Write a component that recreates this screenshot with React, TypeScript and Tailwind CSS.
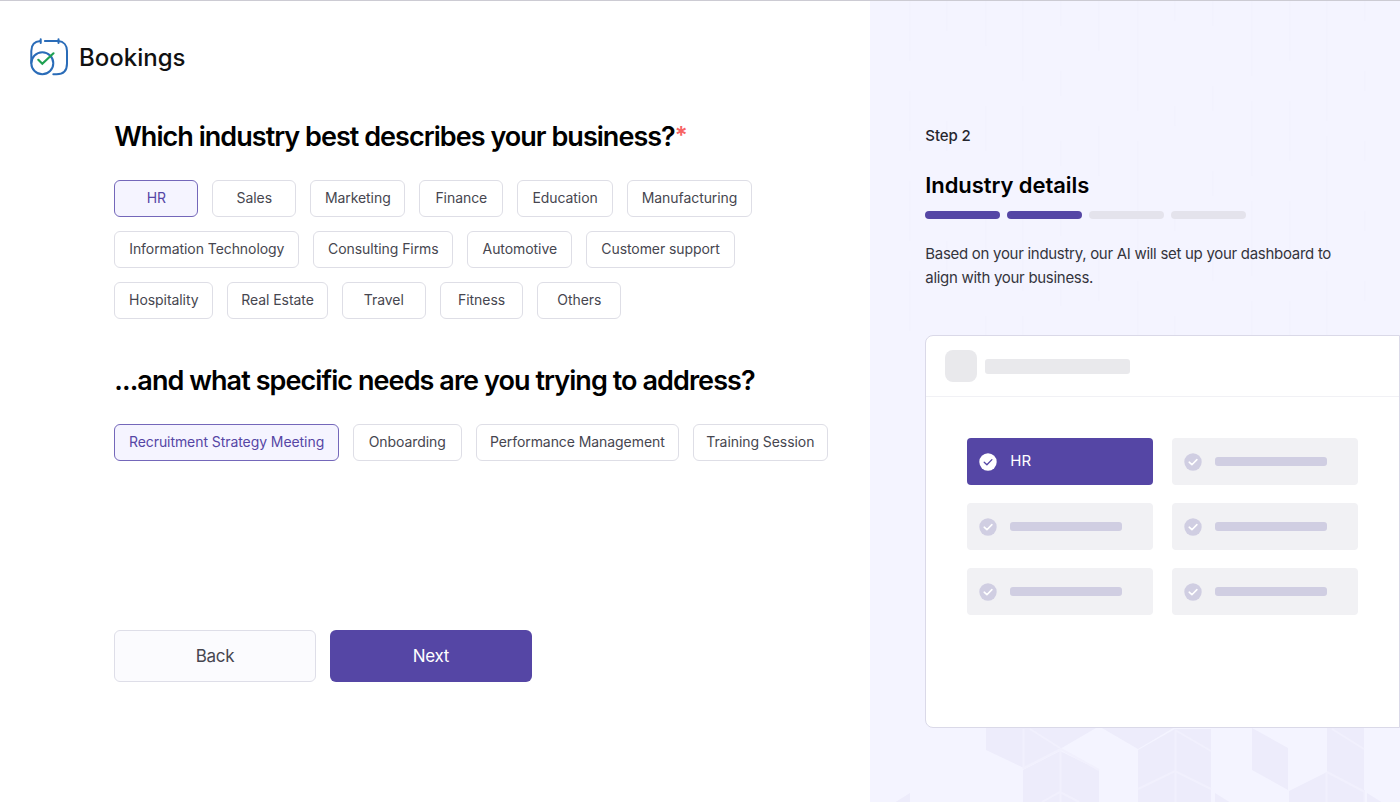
import React from "react";
import { clsx } from "clsx";

const industries = [
    [
        { label: "HR", width: "w-[84px]", active: true },
        { label: "Sales", width: "w-[84px]" },
        { label: "Marketing", width: "w-[95px]" },
        { label: "Finance", width: "w-[84px]" },
        { label: "Education", width: "w-[95.5px]" },
        { label: "Manufacturing", width: "w-[125.5px]" },
    ],
    [
        { label: "Information Technology", width: "w-[185px]" },
        { label: "Consulting Firms", width: "w-[140px]" },
        { label: "Automotive", width: "w-[105px]" },
        { label: "Customer support", width: "w-[148.5px]" },
    ],
    [
        { label: "Hospitality", width: "w-[99px]" },
        { label: "Real Estate", width: "w-[100.5px]" },
        { label: "Travel", width: "w-[84px]" },
        { label: "Fitness", width: "w-[83.5px]" },
        { label: "Others", width: "w-[84px]" },
    ],
];

const needs = [
    { label: "Recruitment Strategy Meeting", width: "w-[224.5px]", active: true },
    { label: "Onboarding", width: "w-[109px]" },
    { label: "Performance Management", width: "w-[203px]" },
    { label: "Training Session", width: "w-[135px]" },
];

// Faint dashed verticals behind the side panel
const gridLines = [
    { x: 40, dash: "60 30" },
    { x: 77, dash: "30 90" },
    { x: 116, dash: "45 60" },
    { x: 153, dash: "80 25" },
    { x: 191, dash: "25 45" },
    { x: 229, dash: "50 75" },
    { x: 268, dash: "110 30" },
    { x: 305, dash: "20 85" },
    { x: 343, dash: "25 60" },
    { x: 382, dash: "75 25" },
    { x: 420, dash: "60 40" },
    { x: 457, dash: "120 15" },
    { x: 495, dash: "20 50" },
];

type Option = { label: string; width: string; active?: boolean };

function Chip({ label, width, active }: Option) {
    return (
        <button
            className={clsx(
                "h-[37px] shrink-0 rounded-md border pb-0.5 text-[14px] tracking-[-0.07px] whitespace-nowrap",
                width,
                active ? "border-[#7467ba] bg-[#f5f4ff] text-[#5546a5]" : "border-[#dedee6] bg-white text-[#46464f]"
            )}
        >
            {label}
        </button>
    );
}

function Logo() {
    return (
        <svg className="h-10 w-10" viewBox="0 0 40 40" fill="none" strokeLinecap="round">
            <g stroke="#2a6cb8" strokeWidth="2">
                <path d="M11.3 4.1C5.5 4.6 2.3 8.5 2.3 14V26" />
                <path d="M11.7 2.3V6M29.5 2.3V6" />
                <path d="M15.9 4.1H29.3C34.8 4.5 38 8.5 38 14V26.5C38 33.5 34 37.3 27.5 37.3H24.3" />
                <circle cx="13.3" cy="26.3" r="11" />
            </g>
            <path d="M9.3 22.8L13.3 26.7L24.5 16.3" stroke="#1fa152" strokeWidth="2.2" />
        </svg>
    );
}

function CheckBadge({ active }: { active?: boolean }) {
    return (
        <svg className="h-[18px] w-[18px] shrink-0" viewBox="0 0 18 18" fill="none">
            <circle cx="9" cy="9" r="8.7" fill={active ? "#ffffff" : "#d0cee2"} />
            <path
                d="M5.2 9.2L7.9 11.7L12.9 6.6"
                stroke={active ? "#5546a5" : "#ffffff"}
                strokeWidth={active ? 1.3 : 1.6}
                strokeLinecap="round"
                strokeLinejoin="round"
            />
        </svg>
    );
}

function Backdrop() {
    return (
        <svg className="absolute inset-0 h-full w-full" viewBox="0 0 530 801" fill="none">
            {gridLines.map((line) => (
                <path key={line.x} d={`M${line.x} 0V334`} stroke="#f1f1fd" strokeDasharray={line.dash} />
            ))}
            <g fill="#edecfb">
                <path d="M116 720H238L190 748L154 767L116 749Z" />
                <path d="M190 750L229 769V802H153V769Z" />
                <path d="M220 720H315L268 748Z" />
                <path d="M268 749L305 728H341V802H268Z" />
                <path d="M382 727L418 747V789L382 769Z" />
                <path d="M457 720H494V789L531 810H419V790L457 771Z" />
                <path d="M345 792L361 802H345Z" />
                <path d="M24 802L40 792V802Z" />
            </g>
            <g stroke="#f1f0fd" strokeWidth="2">
                <path d="M153.5 728V768M160 728L190 747M190.5 750V802M172 801L190 791L209 801" />
                <path d="M305.5 729V802M305 729L341 750M268 788L305 770L341 788" />
                <path d="M456.5 771V802M457 771L495 791M462 728L494 748M494.5 790V802" />
                <path d="M154 767L191 748L229 769" />
            </g>
            <path d="M495 789V802H531V728H495Z" fill="#f4f4ff" />
            <path d="M497 792L513 802H497Z" fill="#edecfb" />
        </svg>
    );
}

function Tile({ label }: { label?: string }) {
    return (
        <div
            className={clsx(
                "flex h-[47px] items-center rounded pl-3 text-white",
                label ? "bg-[#5546a5]" : "bg-[#f1f1f4]"
            )}
        >
            <CheckBadge active={Boolean(label)} />
            {label ? (
                <span className="ml-[13px] text-[15px]">{label}</span>
            ) : (
                <span className="ml-[13px] h-[9px] w-[112px] rounded-[3px] bg-[#d0cee2]" />
            )}
        </div>
    );
}

export default function App() {
    return (
        <div className="flex h-[802px] w-[1400px] overflow-hidden border-t border-[#cccbd3] bg-white font-['Inter',sans-serif]">
            <main className="w-[870px] shrink-0">
                <header className="flex items-center gap-[10px] pt-9 pl-[29px]">
                    <Logo />
                    <span className="pt-px text-[24px] leading-[39px] font-medium text-[#111111]">Bookings</span>
                </header>

                <div className="pl-[114.3px]">
                    <h1 className="mt-[42px] h-9 text-[27px] leading-9 font-semibold tracking-[-0.97px] text-black">
                        Which industry best describes your business?
                        <span className="align-[2px] text-[24px] leading-none text-[#f76464]">*</span>
                    </h1>
                    <div className="mt-[25px] flex flex-col gap-[14px]">
                        {industries.map((row, i) => (
                            <div key={i} className="flex gap-[14px]">
                                {row.map((item) => (
                                    <Chip key={item.label} {...item} />
                                ))}
                            </div>
                        ))}
                    </div>

                    <h2 className="mt-[44px] text-[27px] leading-9 font-semibold tracking-[-0.93px] text-black">
                        ...and what specific needs are you trying to address?
                    </h2>
                    <div className="mt-[25px] flex gap-[14px]">
                        {needs.map((item) => (
                            <Chip key={item.label} {...item} />
                        ))}
                    </div>

                    <div className="mt-[169px] flex gap-[14px]">
                        <button className="h-[52px] w-[201.5px] rounded-md border border-[#dedee8] bg-[#fbfbfe] pt-px text-[17px] tracking-[-0.3px] text-[#46464f]">
                            Back
                        </button>
                        <button className="h-[52px] w-[202px] rounded-md bg-[#5546a5] pt-px text-[17px] tracking-[-0.3px] text-white">
                            Next
                        </button>
                    </div>
                </div>
            </main>

            <aside className="relative w-[530px] shrink-0 bg-[#f4f4ff]">
                <Backdrop />
                <div className="relative pt-[123px] pl-[55.3px]">
                    <p className="text-[15px] leading-6 font-medium tracking-[-0.1px] text-[#26262e]">Step 2</p>
                    <h3 className="mt-[21px] text-[22px] leading-8 font-semibold tracking-[-0.07px] text-black">
                        Industry details
                    </h3>
                    <div className="mt-[10px] flex gap-[7.5px]">
                        <span className="h-[8px] w-[74.5px] rounded-full bg-[#5546a5]" />
                        <span className="h-[8px] w-[74.5px] rounded-full bg-[#5546a5]" />
                        <span className="h-[8px] w-[74.5px] rounded-full bg-[#e4e3ec]" />
                        <span className="h-[8px] w-[74.5px] rounded-full bg-[#e4e3ec]" />
                    </div>
                    <p className="mt-[23px] text-[15px] leading-[23.5px] tracking-[-0.29px] whitespace-nowrap text-[#34343d]">
                        Based on your industry, our AI will set up your dashboard to
                        <br />
                        align with your business.
                    </p>

                    <div className="mt-[46px] h-[393px] rounded-l-lg border border-[#dad9e8] bg-white">
                        <div className="flex h-[61px] items-center gap-2 border-b border-[#f1f1f5] pl-[19px]">
                            <span className="h-8 w-8 rounded-lg bg-[#e9e9ec]" />
                            <span className="h-[15px] w-[145px] rounded-[3px] bg-[#e9e9ec]" />
                        </div>
                        <div className="grid grid-cols-[186px_186px] gap-x-[18.5px] gap-y-[18px] pt-[41px] pl-[41px]">
                            <Tile label="HR" />
                            <Tile />
                            <Tile />
                            <Tile />
                            <Tile />
                            <Tile />
                        </div>
                    </div>
                </div>
            </aside>
        </div>
    );
}
